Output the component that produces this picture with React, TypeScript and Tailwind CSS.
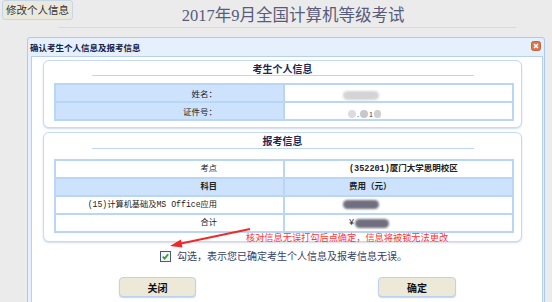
import React from "react";

// Confirm-info dialog: candidate details + registration details, with a
// red annotation arrow pointing at the confirmation checkbox.

const cjk = { fontFamily: '"Noto Sans CJK SC", "Liberation Sans", sans-serif' };
const mono = { fontFamily: '"Liberation Mono", "Noto Sans CJK SC", monospace' };
const serif = { fontFamily: '"Liberation Serif", "Noto Sans CJK SC", serif' };

function Blob({ w, dark }: { w: number; dark?: boolean }) {
  return (
    <span
      className={`inline-block h-[9px] rounded-full align-middle blur-[1px] ${
        dark ? "bg-[#6f6f80]" : "bg-[#d4d4d6]"
      }`}
      style={{ width: w }}
    />
  );
}

function Panel({ title, children, tall }: { title: string; children: React.ReactNode; tall?: boolean }) {
  return (
    <div className="w-[479px] rounded-[6px] border border-[#c3dbf6] bg-white shadow-[0_1px_2px_rgba(120,150,190,0.35)]">
      <div
        className={`flex items-center justify-center text-[10px] font-bold text-[#1d2757] ${tall ? "h-[15px]" : "h-[14px]"}`}
        style={cjk}
      >
        {title}
      </div>
      <div className="ml-[48px] h-px w-[382px] bg-[#bcd6f4]" />
      <div className={`${tall ? "mt-[10px] pb-[8px]" : "mt-[7px] pb-[6px]"} pl-[10px]`}>{children}</div>
    </div>
  );
}

function Row({ left, right, head }: { left: React.ReactNode; right: React.ReactNode; head?: boolean }) {
  return (
    <tr className={`h-[18px] ${head ? "bg-[#cde3fd] font-bold" : ""}`}>
      <td
        className="w-[229px] border-2 border-[#bad6f6] p-0 pr-[66px] text-right text-[8.2px] leading-none text-[#222]"
        style={mono}
      >
        {left}
      </td>
      <td className="w-[229px] border-2 border-[#bad6f6] p-0 pl-[64px] text-left text-[8.5px] leading-none text-[#222]" style={mono}>
        {right}
      </td>
    </tr>
  );
}

export default function App() {
  return (
    <div className="relative h-[302px] w-[552px] overflow-hidden bg-[#ebebeb]" style={cjk}>
      {/* page header */}
      <div className="h-[37px]">
        <div
          className="ml-[58px] flex h-[28px] w-[458px] items-end justify-center border-b border-[#cbdaec] pb-[3px] pl-[12px] text-[16.5px] leading-none text-[#585c7c]"
          style={serif}
        >
          2017年9月全国计算机等级考试
        </div>
      </div>

      {/* floating edit button */}
      <button className="absolute left-[2px] top-0 flex h-[20px] w-[71px] items-center justify-center rounded-[3px] border border-[#c6d6ea] bg-[#ebe8dc] text-[10.5px] text-[#333]">
        修改个人信息
      </button>

      {/* dialog */}
      <div className="ml-[27px] h-[280px] w-[518px] rounded-t-[3px] border border-[#aecaec] bg-[#e6effc]">
        <div className="flex h-[18px] items-center justify-between pl-[2px] pr-[3px]">
          <span className="text-[8.5px] font-bold text-[#14224a]">确认考生个人信息及报考信息</span>
          <svg width="10" height="10" viewBox="0 0 10 10" className="mt-[-2px]">
            <rect x="0.5" y="0.5" width="9" height="9" rx="2" fill="#d8784c" stroke="#c4663c" />
            <path d="M3 3 L7 7 M7 3 L3 7" stroke="#fff" strokeWidth="1.6" />
          </svg>
        </div>
        <div className="ml-[3px] h-[262px] w-[512px] border border-[#b8d0ef] bg-white pl-[11px] pt-[3px]">
          <Panel title="考生个人信息">
            <table className="border-collapse">
              <tbody>
                <tr className="h-[18px]">
                  <td className="w-[229px] border-2 border-[#bad6f6] bg-[#cde3fd] p-0 pr-[66px] text-right text-[8.5px] leading-none text-[#222]">
                    姓名：
                  </td>
                  <td className="w-[229px] border-2 border-[#bad6f6] p-0 pl-[58px] leading-none">
                    <Blob w={36} />
                  </td>
                </tr>
                <tr className="h-[18px]">
                  <td className="w-[229px] border-2 border-[#bad6f6] bg-[#cde3fd] p-0 pr-[66px] text-right text-[8.5px] leading-none text-[#222]">
                    证件号：
                  </td>
                  <td className="w-[229px] border-2 border-[#bad6f6] p-0 pl-[63px] leading-none">
                    <span className="inline-flex items-center gap-[1px]">
                      <span className="h-[8px] w-[8px] rounded-full bg-[#dcdce0] blur-[0.5px]" />
                      <span className="text-[7px] text-[#333]">.</span>
                      <span className="h-[8px] w-[8px] rounded-full bg-[#c8c8cc] blur-[0.5px]" />
                      <span className="text-[7px] text-[#333]">1</span>
                      <span className="h-[8px] w-[7px] rounded-full bg-[#cfcfd3] blur-[0.5px]" />
                    </span>
                  </td>
                </tr>
              </tbody>
            </table>
          </Panel>

          <div className="mt-[4px]">
            <Panel title="报考信息" tall>
              <table className="border-collapse">
                <tbody>
                  <Row left="考点" right={<span className="font-bold">(352201)厦门大学思明校区</span>} />
                  <Row head left="科目" right="费用（元）" />
                  <Row left="(15)计算机基础及MS Office应用" right={<span className="-ml-[6px]"><Blob w={36} dark /></span>} />
                  <Row
                    left="合计"
                    right={
                      <span className="inline-flex items-center gap-[1px]">
                        ¥<Blob w={34} dark />
                      </span>
                    }
                  />
                </tbody>
              </table>
            </Panel>
          </div>

          {/* confirm checkbox */}
          <div className="mt-[7px] flex h-[14px] items-center pl-[117px]">
            <svg width="11" height="11" viewBox="0 0 11 11">
              <rect x="0.5" y="0.5" width="10" height="10" fill="#f3f5f8" stroke="#4b5a78" />
              <path d="M2.8 5.6 L4.6 7.6 L8.2 3.2" fill="none" stroke="#2aa52a" strokeWidth="1.7" />
            </svg>
            <span className="ml-[6px] text-[10px] leading-none text-[#34406a]">
              勾选，表示您已确定考生个人信息及报考信息无误。
            </span>
          </div>

          {/* actions */}
          <div className="mt-[14px] flex gap-[182px] pl-[76px]">
            <button className="flex h-[20px] w-[77px] items-center justify-center rounded-[4px] border border-[#bcd2ee] bg-[#ece9d9] text-[10px] font-bold text-[#111] shadow-[0_1px_1px_rgba(150,170,200,0.5)]">
              关闭
            </button>
            <button className="flex h-[20px] w-[78px] items-center justify-center rounded-[4px] border border-[#bcd2ee] bg-[#ece9d9] text-[10px] font-bold text-[#111] shadow-[0_1px_1px_rgba(150,170,200,0.5)]">
              确定
            </button>
          </div>
        </div>
      </div>

      {/* red annotation */}
      <svg className="absolute left-0 top-0" width="552" height="302" viewBox="0 0 552 302">
        <line x1="181" y1="243.5" x2="250" y2="229" stroke="#ee2a2a" strokeWidth="1.8" />
        <polygon points="170,246 182.5,247.6 180.9,239.5" fill="#ee2a2a" />
      </svg>
      <div className="absolute left-[246px] top-[232px] text-[9.2px] leading-[10px] text-[#ff3030]">
        核对信息无误打勾后点确定，信息将被锁无法更改
      </div>
    </div>
  );
}
